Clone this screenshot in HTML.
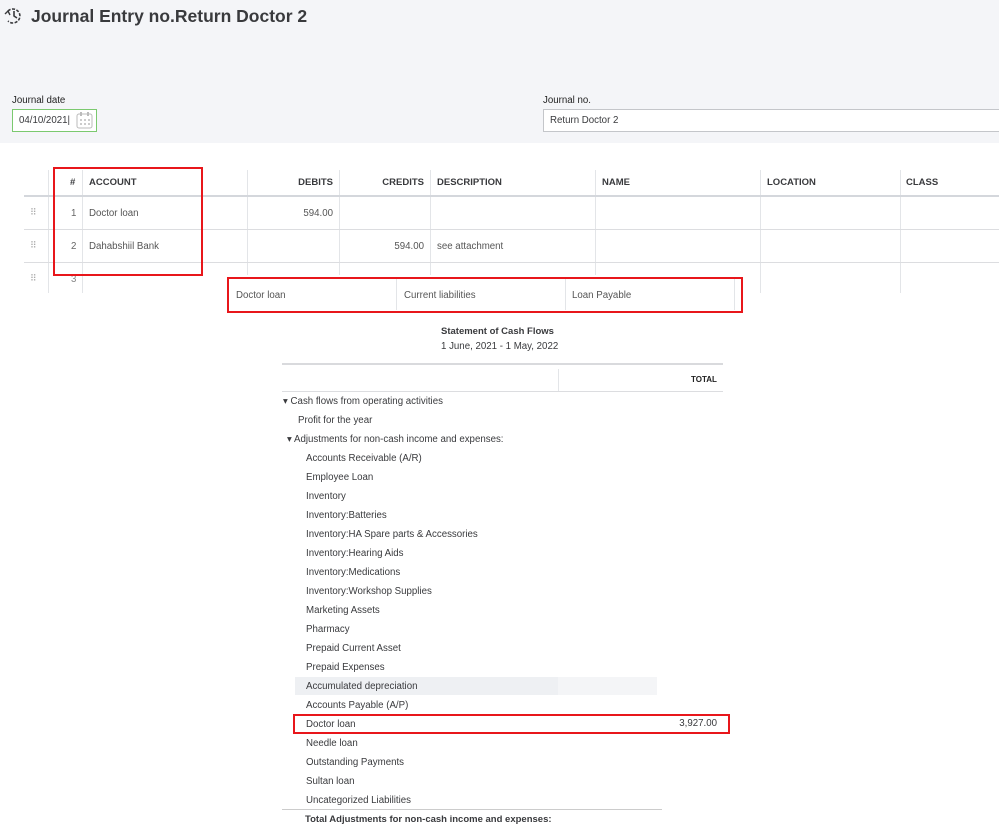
<!DOCTYPE html>
<html><head><style>
body{margin:0;width:999px;height:839px;background:#fff;font-family:"Liberation Sans",sans-serif;position:relative;overflow:hidden;color:#393a3d}
.a{position:absolute;white-space:nowrap}
.t{font-size:9.7px;color:#393a3d}
.h{font-size:9.5px;font-weight:bold;color:#393a3d}
.vl{position:absolute;width:1px;background:#e3e5e8}
.hl{position:absolute;height:1px;background:#dcdde0}
.red{position:absolute;border:2px solid #e8161b;box-sizing:border-box}
.r{text-align:right}
</style></head><body>
<div class="a" style="left:0;top:0;width:999px;height:143px;background:#f4f5f8"></div>
<svg class="a" style="left:4px;top:6px" width="20" height="20" viewBox="0 0 20 20"><path d="M4 5 A7 7 0 1 1 4 15" fill="none" stroke="#393a3d" stroke-width="1.6" stroke-dasharray="3 1.5"/><path d="M10 5 V10 L13 12" fill="none" stroke="#393a3d" stroke-width="1.6"/><path d="M1 8 L4 5 L6 9" fill="none" stroke="#393a3d" stroke-width="1.4"/></svg>
<div class="a" style="left:31px;top:6px;font-size:17.5px;font-weight:bold;color:#393a3d">Journal Entry no.Return Doctor 2</div>
<div class="a t" style="left:12px;top:95px;color:#222">Journal date</div>
<div class="a" style="left:12px;top:109px;width:85px;height:23px;border:1px solid #7bc96f;box-sizing:border-box;background:#fff"></div>
<div class="a t" style="left:19px;top:115px">04/10/2021|</div>
<svg class="a" style="left:76px;top:111px" width="17" height="18" viewBox="0 0 17 18"><rect x="1" y="3" width="15" height="14" rx="2" fill="none" stroke="#bbb"/><g fill="#ccc"><rect x="4" y="8" width="2" height="2"/><rect x="8" y="8" width="2" height="2"/><rect x="12" y="8" width="2" height="2"/><rect x="4" y="12" width="2" height="2"/><rect x="8" y="12" width="2" height="2"/><rect x="12" y="12" width="2" height="2"/></g><rect x="4" y="1" width="2" height="4" fill="#bbb"/><rect x="11" y="1" width="2" height="4" fill="#bbb"/></svg>
<div class="a t" style="left:543px;top:95px;color:#222">Journal no.</div>
<div class="a" style="left:543px;top:109px;width:460px;height:23px;border:1px solid #c4c6ca;box-sizing:border-box;background:#fff"></div>
<div class="a t" style="left:550px;top:115px">Return Doctor 2</div>

<div class="vl" style="left:48px;top:170px;height:123px"></div>
<div class="vl" style="left:82px;top:170px;height:123px"></div>
<div class="vl" style="left:247px;top:170px;height:105px"></div>
<div class="vl" style="left:339px;top:170px;height:105px"></div>
<div class="vl" style="left:430px;top:170px;height:105px"></div>
<div class="vl" style="left:595px;top:170px;height:105px"></div>
<div class="vl" style="left:760px;top:170px;height:123px"></div>
<div class="vl" style="left:900px;top:170px;height:123px"></div>
<div class="hl" style="left:24px;top:195px;width:975px;height:2px;background:#d4d7dc"></div>
<div class="hl" style="left:24px;top:229px;width:975px"></div>
<div class="hl" style="left:24px;top:262px;width:975px"></div>
<div class="a h" style="left:70px;top:177px">#</div>
<div class="a h" style="left:89px;top:177px">ACCOUNT</div>
<div class="a h r" style="left:233px;top:177px;width:100px">DEBITS</div>
<div class="a h r" style="left:324px;top:177px;width:100px">CREDITS</div>
<div class="a h" style="left:437px;top:177px">DESCRIPTION</div>
<div class="a h" style="left:602px;top:177px">NAME</div>
<div class="a h" style="left:767px;top:177px">LOCATION</div>
<div class="a h" style="left:906px;top:177px">CLASS</div>
<div class="a t" style="left:30px;top:207px;color:#aaa;font-size:9px">⠿</div>
<div class="a t" style="left:30px;top:240px;color:#aaa;font-size:9px">⠿</div>
<div class="a t" style="left:30px;top:273px;color:#aaa;font-size:9px">⠿</div>
<div class="a t" style="left:71px;top:208px;color:#666">1</div>
<div class="a t" style="left:71px;top:241px;color:#666">2</div>
<div class="a t" style="left:71px;top:274px;color:#888">3</div>
<div class="a t" style="left:89px;top:208px;color:#555">Doctor loan</div>
<div class="a t" style="left:89px;top:241px;color:#555">Dahabshiil Bank</div>
<div class="a t r" style="left:233px;top:208px;width:100px;color:#555">594.00</div>
<div class="a t r" style="left:324px;top:241px;width:100px;color:#555">594.00</div>
<div class="a t" style="left:437px;top:241px;color:#555">see attachment</div>
<div class="red" style="left:53px;top:167px;width:150px;height:109px"></div>

<div class="a" style="left:228px;top:277px;width:514px;height:35px;background:#fff"></div>
<div class="vl" style="left:396px;top:279px;height:31px"></div>
<div class="vl" style="left:565px;top:279px;height:31px"></div>
<div class="vl" style="left:734px;top:279px;height:31px"></div>
<div class="a t" style="left:236px;top:290px;color:#555">Doctor loan</div>
<div class="a t" style="left:404px;top:290px;color:#555">Current liabilities</div>
<div class="a t" style="left:572px;top:290px;color:#555">Loan Payable</div>
<div class="red" style="left:227px;top:277px;width:516px;height:36px"></div>

<div class="a h" style="left:441px;top:326px">Statement of Cash Flows</div>
<div class="a t" style="left:441px;top:341px">1 June, 2021 - 1 May, 2022</div>
<div class="hl" style="left:282px;top:363px;width:441px;height:2px;background:#d9dadd"></div>
<div class="vl" style="left:558px;top:369px;height:22px"></div>
<div class="a" style="left:691px;top:375px;font-size:8px;font-weight:bold;color:#222">TOTAL</div>
<div class="hl" style="left:282px;top:391px;width:441px"></div>
<div class="a" style="left:295px;top:677px;width:362px;height:18px;background:#eef0f3"></div>
<div class="a" style="left:558px;top:677px;width:99px;height:18px;background:#f4f5f7"></div>
<div class="a t" style="left:283px;top:396px">▾ Cash flows from operating activities</div>
<div class="a t" style="left:298px;top:415px">Profit for the year</div>
<div class="a t" style="left:287px;top:434px">▾ Adjustments for non-cash income and expenses:</div>
<div class="a t" style="left:306px;top:449px;line-height:19px">Accounts Receivable (A/R)<br>Employee Loan<br>Inventory<br>Inventory:Batteries<br>Inventory:HA Spare parts &amp; Accessories<br>Inventory:Hearing Aids<br>Inventory:Medications<br>Inventory:Workshop Supplies<br>Marketing Assets<br>Pharmacy<br>Prepaid Current Asset<br>Prepaid Expenses<br>Accumulated depreciation<br>Accounts Payable (A/P)<br>Doctor loan<br>Needle loan<br>Outstanding Payments<br>Sultan loan<br>Uncategorized Liabilities</div>
<div class="a t r" style="left:617px;top:718px;width:100px">3,927.00</div>
<div class="red" style="left:293px;top:714px;width:437px;height:20px"></div>
<div class="hl" style="left:282px;top:809px;width:380px;background:#ccc"></div>
<div class="a h" style="left:305px;top:814px">Total Adjustments for non-cash income and expenses:</div>
</body></html>
